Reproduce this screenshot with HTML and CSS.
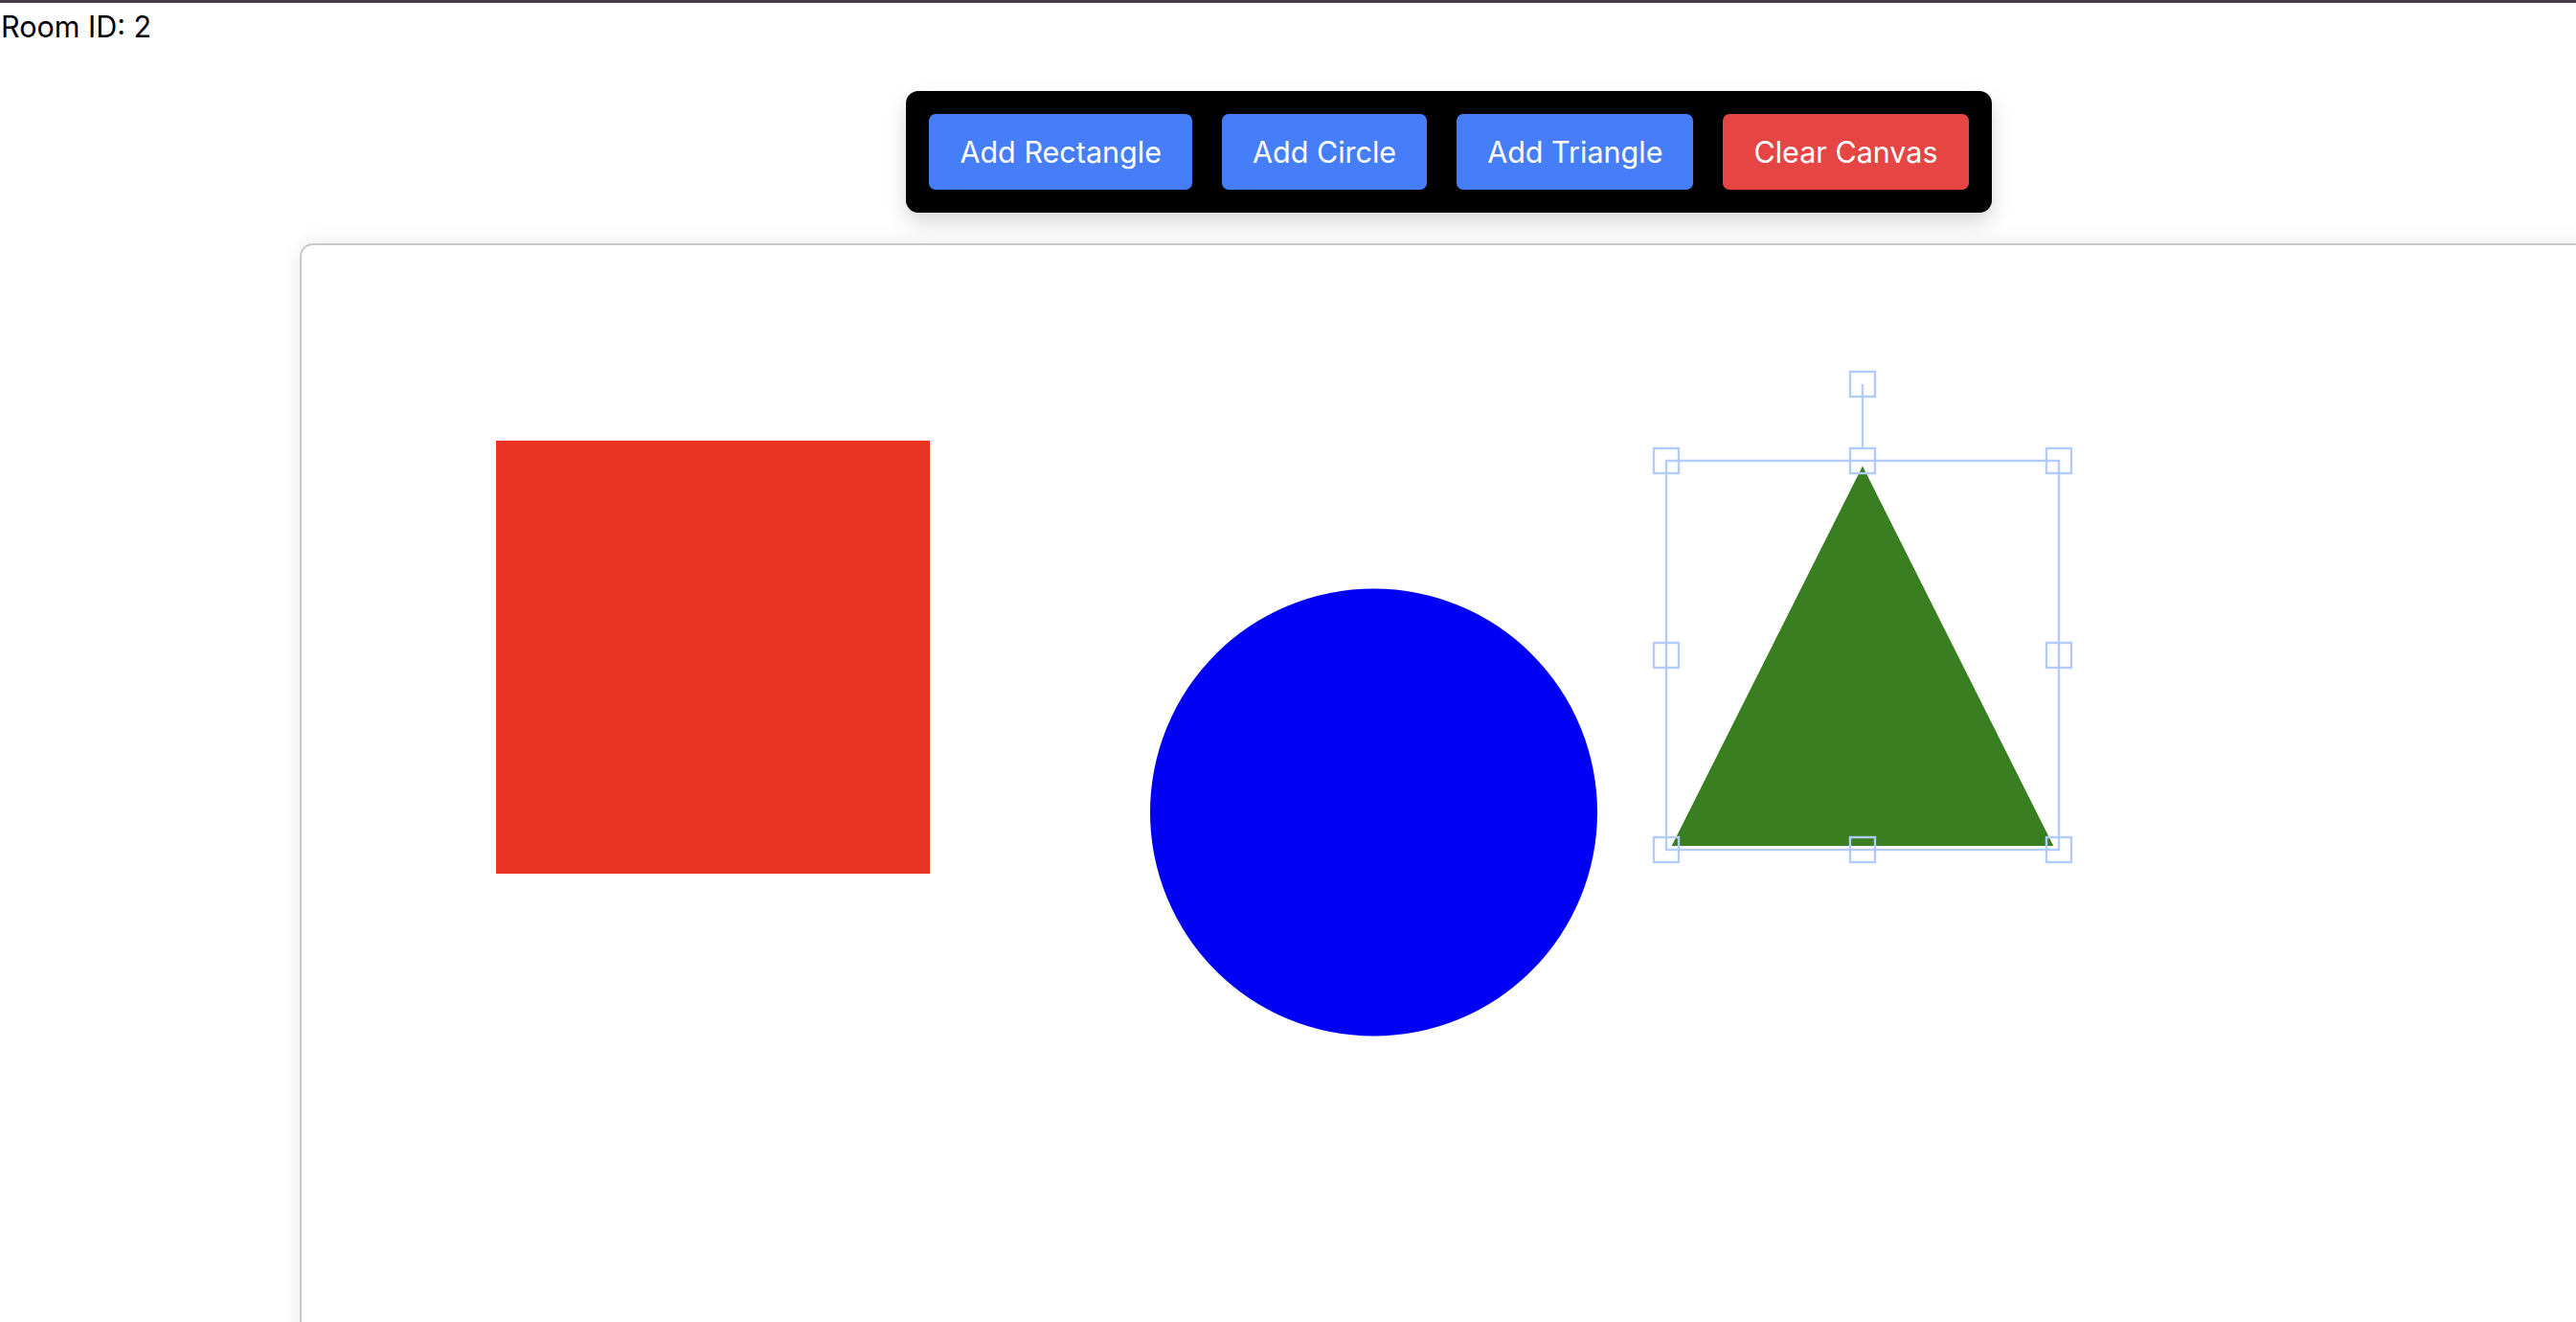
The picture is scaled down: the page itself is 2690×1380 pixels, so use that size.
FILE: index.html
```html
<!DOCTYPE html>
<html lang="en">
<head>
<meta charset="utf-8">
<title>Room 2</title>
<link rel="stylesheet" href="styles.css">
</head>
<body>
<div class="topline"></div>
<div class="room-id">Room ID: 2</div>
<main class="stage">
  <div class="toolbar">
    <button class="btn btn-blue">Add Rectangle</button>
    <button class="btn btn-blue">Add Circle</button>
    <button class="btn btn-blue">Add Triangle</button>
    <button class="btn btn-red">Clear Canvas</button>
  </div>
  <div class="canvas">
    <svg class="drawing" width="2396" height="1366" viewBox="0 0 2396 1366">
      <rect x="203" y="204" width="453" height="452" fill="#e93323"/>
      <circle cx="1119.5" cy="592" r="233.5" fill="#0000f5"/>
      <polygon points="1630,230.5 1430.7,627 1829.3,627" fill="#3a7e22"/>
      <g class="selection" fill="none" stroke="#b2ccff" stroke-width="2.4">
        <rect x="1425" y="225" width="410" height="406"/>
        <line x1="1630" y1="145" x2="1630" y2="212"/>
        <rect x="1617" y="132" width="26" height="26"/>
        <rect x="1412" y="212" width="26" height="26"/>
        <rect x="1617" y="212" width="26" height="26"/>
        <rect x="1822" y="212" width="26" height="26"/>
        <rect x="1412" y="415" width="26" height="26"/>
        <rect x="1822" y="415" width="26" height="26"/>
        <rect x="1412" y="618" width="26" height="26"/>
        <rect x="1617" y="618" width="26" height="26"/>
        <rect x="1822" y="618" width="26" height="26"/>
      </g>
    </svg>
  </div>
</main>
</body>
</html>
```
FILE: styles.css
```css
html, body {
  margin: 0;
  padding: 0;
  background: #ffffff;
  overflow: hidden;
  height: 100%;
}

body {
  font-family: "Inter", "Noto Sans", sans-serif;
  color: #000;
  font-size: 30.5px;
}

.topline {
  height: 3px;
  background: #453a48;
}

.room-id {
  padding: 7px 0 0 1px;
  line-height: 36px;
  height: 35px;
}

.stage {
  margin-left: 313px;
  width: 2400px;
  display: flex;
  flex-direction: column;
  align-items: center;
}

.toolbar {
  margin-top: 50px;
  background: #000;
  border-radius: 13px;
  padding: 24px;
  display: flex;
  gap: 31px;
  box-shadow: 0 10px 22px rgba(0, 0, 0, 0.16);
}

.btn {
  font-family: "Inter", "Noto Sans", sans-serif;
  font-size: 30.5px;
  line-height: 79px;
  height: 79px;
  padding: 0 32px;
  border: none;
  border-radius: 7px;
  color: #fff;
  cursor: pointer;
}

.btn-blue {
  background: #457ef8;
}

.btn-red {
  background: #e54543;
}

.canvas {
  margin-top: 32px;
  align-self: stretch;
  height: 1370px;
  border: 2px solid #c9c9c9;
  border-radius: 14px;
  box-shadow: 0 0 22px rgba(0, 0, 0, 0.09);
  background: #fff;
  overflow: hidden;
}

.drawing {
  display: block;
}
```
